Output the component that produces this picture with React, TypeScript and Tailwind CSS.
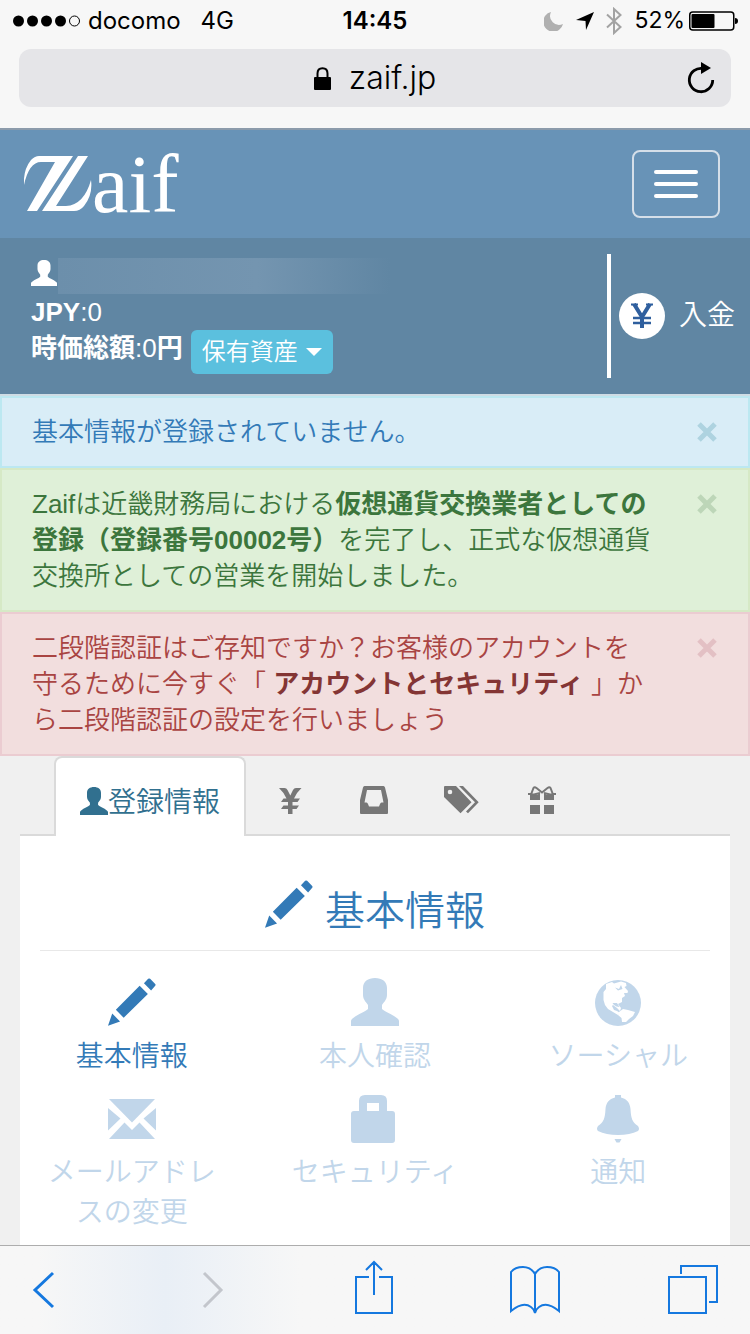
import type { ReactNode } from 'react';

type IconProps = { className?: string };

const UserIcon = ({ className }: IconProps) => (
  <svg viewBox="0 0 48 48" className={className} fill="currentColor" aria-hidden="true">
    <path d="M24 0C17 0 12 3.500 12 10V17C12 22 16 25 17 27V31C14 34 7 36 1.500 40.500Q0 41.500 0 43V48H48V43Q48 41.500 46.500 40.500C41 36 34 34 31 31V27C32 25 36 22 36 17V10C36 3.500 31 0 24 0Z" />
  </svg>
);

const PencilIcon = ({ className }: IconProps) => (
  <svg viewBox="0 0 49 49" className={className} fill="currentColor" aria-hidden="true">
    <path d="M36.700 5.300 41 .8Q42 0 43 .8L48.200 6Q49 7 48.200 8L44 12.700ZM32.300 8 40.700 16.300 16 40.700 8 32.300ZM4.300 36.300 12.300 44.300 0 48.700Z" />
  </svg>
);

const GlobeIcon = ({ className }: IconProps) => (
  <svg viewBox="0 0 48 48" className={className} aria-hidden="true">
    <circle cx="24" cy="25" r="23" fill="currentColor" />
    <path
      fill="#fff"
      d="M12 6 18 4 20 5.500 27 3.500 32 5 32.500 8 30.500 9 34 13 33.500 15 30 15 31 18 28 20 28 24 24 26 27 30 26 33 23 30 19 27 18 28 20 32 23 33 26 35 24 37 19 34 14 31 11 27 9.500 22 9.500 14 12 11Z"
    />
    <path fill="currentColor" d="M21 9.500 25 11 27 7 28.500 11 24 12.500ZM18.500 25 23 25 25.500 29 22.500 28.500 20 27Z" />
    <path fill="#fff" d="M25 34 29 31 34 32 41 34 39 38 35 41 32 44 28 44 27.500 40 24 37Z" />
  </svg>
);

const EnvelopeIcon = ({ className }: IconProps) => (
  <svg viewBox="0 0 48 48" className={className} fill="currentColor" aria-hidden="true">
    <path d="M1 5H47L24 28.500ZM0 14 12.500 24.500 0 36.500ZM48 14 35.500 24.500 48 36.500ZM1 45 16.500 28.500 24 36 31.500 28.500 47 45Z" />
  </svg>
);

const BagIcon = ({ className }: IconProps) => (
  <svg viewBox="0 0 48 48" className={className} fill="currentColor" aria-hidden="true">
    <path d="M8 17V7Q8 1 14 1H30Q36 1 36 7V17H41Q44 17 44 20V46Q44 49 41 49H3Q0 49 0 46V20Q0 17 3 17ZM16 17H28V9H16Z" />
  </svg>
);

const BellIcon = ({ className }: IconProps) => (
  <svg viewBox="0 0 48 48" className={className} fill="currentColor" aria-hidden="true">
    <path d="M21 1H27V3.500C33 5 36 9 36.500 15C37 24 38 28 44 32Q46 35 44 37Q36 41 24 41Q12 41 4 37Q2 35 4 32C10 28 11 24 11.500 15C12 9 15 5 21 3.500ZM20.500 45H27.500L25.500 48.500H22.500Z" />
  </svg>
);

const YenIcon = ({ className }: IconProps) => (
  <svg viewBox="0 0 28 28" className={className} fill="currentColor" aria-hidden="true">
    <path d="M3 2H8.500Q10.500 2 11.500 4L14.300 9.500 17 4Q18 2 20 2H25.500Q21 6 18 12.500H24L21.500 16H16.500V19.500H23L20.500 23H16.500V28H12V23H5L7.500 19.500H12V16H5L7.500 12.500H10.500Q7.500 6 3 2Z" />
  </svg>
);

const InboxIcon = ({ className }: IconProps) => (
  <svg viewBox="0 0 28 28" className={className} fill="currentColor" aria-hidden="true">
    <path
      fillRule="evenodd"
      d="M4.500 0H23.500Q24.600 0 25 1.500L28 14V27Q28 28 27 28H1Q0 28 0 27V14L3 1.500Q3.400 0 4.500 0ZM7 4 4.500 16.500H6.500Q7.500 16.500 8 18L9 20.500H19L20 18Q20.500 16.500 21.500 16.500H23.500L21 4Z"
    />
  </svg>
);

const TagsIcon = ({ className }: IconProps) => (
  <svg viewBox="0 0 28 28" className={className} fill="currentColor" aria-hidden="true">
    <path
      fillRule="evenodd"
      d="M1 0H12L27.500 16.300 16.500 27.300 0 11V1Q0 0 1 0ZM6 3.700A2.300 2.300 0 1 0 6 8.300 2.300 2.300 0 1 0 6 3.700Z"
    />
    <path d="M15 0H19L34.700 16.300 24 27.300 22 25.500 31 16.300Z" />
  </svg>
);

const GiftIcon = ({ className }: IconProps) => (
  <svg viewBox="0 0 28 28" className={className} fill="currentColor" aria-hidden="true">
    <path d="M0 7H4V9H0ZM24 7H28V9H24ZM2 9 5 8 9 9 12 7V14H2ZM16 7 19 9 23 8 26 9V14H16ZM2 19H12V28H2ZM16 19H26V28H16Z" />
    <path
      d="M3 8.500 5.500 2Q6.500 .5 8.500 2L14 6.500 19.500 2Q21.500 .5 22.500 2L25 8.500M3 8.500H6L12 7M25 8.500H22L16 7"
      fill="none"
      stroke="currentColor"
      strokeWidth="2"
    />
  </svg>
);

const tabs = [
  { id: 'yen', label: '円', icon: YenIcon },
  { id: 'inbox', label: '受信箱', icon: InboxIcon },
  { id: 'tags', label: 'タグ', icon: TagsIcon },
  { id: 'gift', label: 'ギフト', icon: GiftIcon },
];

const menuItems = [
  { id: 'basic', label: '基本情報', icon: PencilIcon, active: true },
  { id: 'identity', label: '本人確認', icon: UserIcon, active: false },
  { id: 'social', label: 'ソーシャル', icon: GlobeIcon, active: false },
  { id: 'mail', label: 'メールアドレスの変更', icon: EnvelopeIcon, active: false },
  { id: 'security', label: 'セキュリティ', icon: BagIcon, active: false },
  { id: 'notice', label: '通知', icon: BellIcon, active: false },
];

const toolbar = [
  { id: 'back', label: '戻る', path: 'M35 13 17 30 35 47', color: 'text-[#1578df]', width: 3 },
  { id: 'forward', label: '進む', path: 'M24 13 41 30 24 47', color: 'text-[#c3c6cc]', width: 3 },
  {
    id: 'share',
    label: '共有',
    path: 'M27 17H14V53H50V17H37M32 35V3M24 10 32 2 40 10',
    color: 'text-[#1578df]',
    width: 2,
  },
  {
    id: 'bookmarks',
    label: 'ブックマーク',
    path: 'M31 14Q27 7 19 7 11 7 7 12V51Q19 41 27 47 30 49 31 53 32 49 35 47 43 41 55 51V12Q51 7 43 7 35 7 31 14V52',
    color: 'text-[#1578df]',
    width: 2,
  },
  {
    id: 'pages',
    label: 'タブ一覧',
    path: 'M3 17H40V53H3ZM15 14V6H51V42H43',
    color: 'text-[#1578df]',
    width: 2,
  },
];

function StatusBar() {
  return (
    <div className="grid h-[41px] grid-cols-[1fr_auto_1fr] items-center px-3 font-['Inter',sans-serif] text-2xl text-black">
      <div className="flex items-center">
        <svg viewBox="0 0 68 12" className="mr-2 h-3 w-[68px]" aria-hidden="true">
          <circle cx="6.500" cy="6" r="5.500" />
          <circle cx="20.500" cy="6" r="5.500" />
          <circle cx="34.500" cy="6" r="5.500" />
          <circle cx="48.500" cy="6" r="5.500" />
          <circle cx="62.500" cy="6" r="5" fill="none" stroke="#000" />
        </svg>
        <span>docomo</span>
        <span className="ml-5">4G</span>
      </div>
      <span className="font-semibold">14:45</span>
      <div className="flex items-center justify-end">
        <svg viewBox="0 0 20 20" className="mr-3 size-5" fill="#b0b0b0" aria-hidden="true">
          <path d="M7 1A10 10 0 1 0 19 13 9 9 0 0 1 7 1Z" />
        </svg>
        <svg viewBox="0 0 18 20" className="mr-3 h-5 w-[18px]" aria-hidden="true">
          <path d="M18 1 10 19 9.500 10 0 9Z" />
        </svg>
        <svg viewBox="0 0 16 28" className="mr-3 h-7 w-4" fill="none" stroke="#a3a3a3" strokeWidth="2" aria-hidden="true">
          <path d="M1 7.500 14.500 20 8 26V2L14.500 8 1 20.500" />
        </svg>
        <span className="mr-1 text-[23px]">52%</span>
        <svg viewBox="0 0 49 20" className="h-5 w-[49px]" aria-hidden="true">
          <rect x=".75" y="1" width="44" height="18" rx="3" fill="none" stroke="#000" strokeWidth="1.500" />
          <rect x="2.500" y="3" width="23" height="14" rx="1" />
          <path d="M46 7Q49 7 49 10 49 13 46 13Z" />
        </svg>
      </div>
    </div>
  );
}

function AddressBar() {
  return (
    <div className="border-b-2 border-[#8c9bab] px-[19px] pt-2 pb-[21px]">
      <div className="grid h-[58px] grid-cols-[1fr_auto_1fr] items-center rounded-xl bg-[#e5e5e8] px-4">
        <span className="col-start-2 flex items-center gap-[18px] font-['Inter',sans-serif] text-[32px] leading-10 font-light text-black">
          <svg viewBox="0 0 17 23" className="h-[23px] w-[17px]" aria-hidden="true">
            <rect y="10" width="17" height="13" rx="1" />
            <path d="M3.500 11V6.500Q3.500 1.200 8.500 1.200 13.500 1.200 13.500 6.500V11" fill="none" stroke="#000" strokeWidth="2" />
          </svg>
          zaif.jp
        </span>
        <button type="button" aria-label="再読み込み" className="justify-self-end">
          <svg viewBox="0 0 28 32" className="h-8 w-7" aria-hidden="true">
            <path d="M16 6.500A11.700 11.700 0 1 0 25.700 18" fill="none" stroke="#000" strokeWidth="2.800" />
            <path d="M14 0 24 6 14 12Z" />
          </svg>
        </button>
      </div>
    </div>
  );
}

function SiteHeader() {
  return (
    <header className="flex h-[108px] items-center justify-between bg-[#6893b7] pr-[30px] pl-6">
      <a href="#home" aria-label="Zaif" className="flex items-baseline text-white">
        <svg viewBox="0 0 68 56" className="h-14 w-[68px]" fill="currentColor" aria-hidden="true">
          <path d="M15 0H49L13 55H3L31 6H17Q5 6 0 29-1 14 7 4 11 0 15 0Z" />
          <path d="M54 0H64L32 50H42Q60 49 67 24 69 39 60 50 56 55 50 55H18Z" />
        </svg>
        <span className="font-['Liberation_Serif',serif] text-[82px] leading-10">aif</span>
      </a>
      <button
        type="button"
        aria-label="メニュー"
        className="flex h-[68px] w-[88px] flex-col items-center justify-center gap-2 rounded-lg border-2 border-[#d5dfe9]"
      >
        <span className="h-1 w-11 rounded-sm bg-white" />
        <span className="h-1 w-11 rounded-sm bg-white" />
        <span className="h-1 w-11 rounded-sm bg-white" />
      </button>
    </header>
  );
}

function AccountPanel() {
  return (
    <section className="flex justify-between bg-[#6086a3] py-4 pr-[15px] pl-[31px] text-[26px] leading-9 text-white">
      <div className="pb-1">
        <div className="flex h-10 items-end">
          <UserIcon className="mb-2 size-[26px]" />
          <span className="ml-px h-9 w-[332px] bg-linear-to-r from-[#6c8fab] via-[#7495b0] via-60% to-[#6086a3]" />
        </div>
        <p>
          <b>JPY</b>:0
        </p>
        <div className="flex">
          <p>
            <b>時価総額</b>:0<b>円</b>
          </p>
          <button
            type="button"
            className="ml-2 flex h-11 items-center gap-2 rounded-md bg-[#5bc0de] px-[11px] text-2xl font-[350]"
          >
            保有資産
            <svg viewBox="0 0 16 8" className="h-2 w-4" fill="currentColor" aria-hidden="true">
              <path d="M0 0H16L8 8Z" />
            </svg>
          </button>
        </div>
      </div>
      <a href="#deposit" className="flex items-center border-l-4 border-white pl-2 text-[28px] font-[350]">
        <span className="mr-[14px] flex size-[46px] items-center justify-center rounded-full bg-white">
          <svg viewBox="0 0 24 26" className="h-[26px] w-6" stroke="#2f5f9e" fill="none" aria-hidden="true">
            <path d="M4 1 12 14 20 1M12 13V25" strokeWidth="4" />
            <path d="M3 15H21M3 20H21" strokeWidth="2.500" />
            <path d="M1 1.500H8M16 1.500H23" strokeWidth="2" />
          </svg>
        </span>
        入金
      </a>
    </section>
  );
}

type AlertProps = { tone: string; closeTone: string; children: ReactNode };

function Alert({ tone, closeTone, children }: AlertProps) {
  return (
    <div
      role="alert"
      className={`flex items-start justify-between border-2 px-[30px] py-4 text-[26px] leading-9 font-[350] ${tone}`}
    >
      <p className="max-w-[622px]">{children}</p>
      <button type="button" aria-label="閉じる" className={`flex h-9 items-center ${closeTone}`}>
        <svg viewBox="0 0 22 22" className="size-[22px]" fill="none" stroke="currentColor" strokeWidth="5" aria-hidden="true">
          <path d="M3 3 19 19M19 3 3 19" />
        </svg>
      </button>
    </div>
  );
}

function Tabs() {
  return (
    <nav className="mx-5 flex h-20 border-b-2 border-[#dadada] pl-[34px] text-[28px] leading-10">
      <a
        href="#profile"
        className="-mb-0.5 flex items-center rounded-t-lg border-2 border-b-0 border-[#dadada] bg-white px-6 pt-3 font-[350] text-[#31708f]"
      >
        <UserIcon className="mb-1 size-7" />
        登録情報
      </a>
      {tabs.map(({ id, label, icon: Icon }) => (
        <a key={id} href={`#${id}`} aria-label={label} className="ml-1 flex items-center px-[26px] pt-2.5 text-[#777]">
          <Icon className="size-7 overflow-visible" />
        </a>
      ))}
    </nav>
  );
}

function ProfileMenu() {
  return (
    <section className="mx-5 grow bg-white px-5 pt-11">
      <h1 className="flex h-[71px] justify-center gap-3 border-b border-[#e8e8e8] text-[40px] leading-[62px] font-[350] text-[#337ab7]">
        <PencilIcon className="size-12" />
        基本情報
      </h1>
      <ul className="-mx-[30px] mt-[27px] grid grid-cols-3 gap-y-[17px] pb-3">
        {menuItems.map(({ id, label, icon: Icon, active }) => (
          <li key={id} className="px-[30px]">
            <a
              href={`#${id}`}
              className={`flex flex-col items-center gap-[11px] text-center text-[28px] leading-10 font-[350] ${
                active ? 'text-[#337ab7]' : 'text-[#c1d6ea]'
              }`}
            >
              <Icon className="size-12 overflow-visible" />
              {label}
            </a>
          </li>
        ))}
      </ul>
    </section>
  );
}

function Toolbar() {
  return (
    <footer className="flex h-[89px] items-center justify-between border-t border-[#adadad] bg-[#f7f7f7] bg-linear-to-r from-[#f7f7f7] from-5% via-[#e9eff6] via-22% to-[#f7f7f7] to-40% pr-[30px] pl-[18px]">
      {toolbar.map((item) => (
        <button key={item.id} type="button" aria-label={item.label} className={item.color}>
          <svg
            viewBox="0 0 54 60"
            className="h-[60px] w-[54px] overflow-visible"
            fill="none"
            stroke="currentColor"
            strokeWidth={item.width}
            aria-hidden="true"
          >
            <path d={item.path} />
          </svg>
        </button>
      ))}
    </footer>
  );
}

export default function App() {
  return (
    <div
      lang="ja"
      className="flex min-h-screen flex-col bg-[#f0f0f0] font-['Liberation_Sans','Noto_Sans_CJK_JP',sans-serif]"
    >
      <div className="bg-[#f7f7f7]">
        <StatusBar />
        <AddressBar />
      </div>
      <SiteHeader />
      <AccountPanel />
      <div className="border-t-2 border-[#cfdde5]">
        <Alert tone="border-[#bce8f1] bg-[#d9edf7] text-[#337ab7]" closeTone="text-[#aed3e0]">
          基本情報が登録されていません。
        </Alert>
        <Alert tone="border-[#d6e9c6] bg-[#dff0d8] text-[#3c763d]" closeTone="text-[#bdd6b8]">
          Zaifは近畿財務局における<b>仮想通貨交換業者としての登録（登録番号00002号）</b>
          を完了し、正式な仮想通貨交換所としての営業を開始しました。
        </Alert>
        <Alert tone="border-[#ebccd1] bg-[#f2dede] text-[#a94442]" closeTone="text-[#e3c0c4]">
          二段階認証はご存知ですか？お客様のアカウントを守るために今すぐ「{' '}
          <a href="#security" className="font-bold text-[#843534]">
            アカウントとセキュリティ
          </a>{' '}
          」から二段階認証の設定を行いましょう
        </Alert>
      </div>
      <Tabs />
      <ProfileMenu />
      <Toolbar />
    </div>
  );
}
